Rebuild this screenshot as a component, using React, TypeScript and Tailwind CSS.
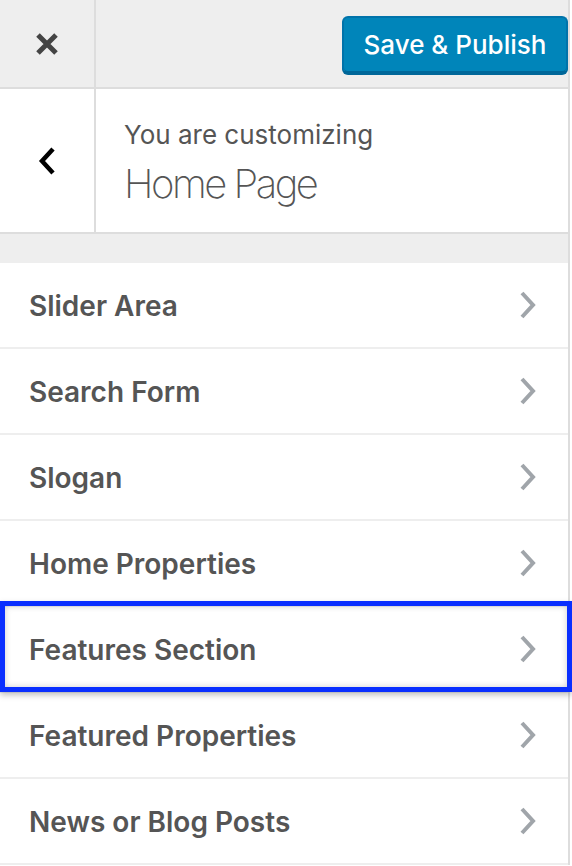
import React from "react";

const items = [
  "Slider Area",
  "Search Form",
  "Slogan",
  "Home Properties",
  "Features Section",
  "Featured Properties",
  "News or Blog Posts",
];

function ChevronRight() {
  return (
    <svg width="20" height="30" viewBox="0 0 20 30" className="shrink-0">
      <path d="M4 3 L15 15 L4 27" fill="none" stroke="#a0a5aa" strokeWidth="4" />
    </svg>
  );
}

export default function App() {
  return (
    <div
      className="relative w-[572px] h-[866px] overflow-hidden bg-white"
      style={{ fontFamily: "Inter, 'Noto Sans', sans-serif" }}
    >
      <div className="w-[570px] border-r-2 border-[#ddd]">
        {/* Header */}
        <div className="flex h-[89px] bg-[#eee] border-b-2 border-[#ddd]">
          <div className="w-[96px] border-r-2 border-[#ddd] flex items-center justify-center">
            <svg width="24" height="24" viewBox="0 0 24 24" className="mr-[1px] mt-[1px]">
              <path d="M3 3 L21 21 M21 3 L3 21" stroke="#444" strokeWidth="5" />
            </svg>
          </div>
          <div className="flex-1 flex items-start justify-end pt-[16px]">
            <button className="h-[57px] w-[226px] rounded-[6px] bg-[#0085ba] border-2 border-[#0073aa] border-b-[#006799] shadow-[0_2px_0_#006799] text-white text-[26px] font-medium">
              Save &amp; Publish
            </button>
          </div>
        </div>
        {/* Info */}
        <div className="flex h-[145px] bg-white border-b-2 border-[#ddd]">
          <div className="w-[96px] border-r-2 border-[#ddd] flex items-center justify-center">
            <svg width="20" height="30" viewBox="0 0 20 30" className="mt-[1px]">
              <path d="M16 3 L5 15 L16 27" fill="none" stroke="#000" strokeWidth="4.5" />
            </svg>
          </div>
          <div className="flex-1 pl-[28px] pt-[31px]">
            <div className="text-[26px] leading-[30px] text-[#555]">You are customizing</div>
            <div className="text-[40px] leading-[48px] font-extralight text-[#555] mt-[10px] tracking-[-2.5px]">
              Home Page
            </div>
          </div>
        </div>
        <div className="h-[29px] bg-[#eee]" />
        {/* Items */}
        {items.map((t) => (
          <div
            key={t}
            className="flex h-[86px] items-center justify-between pl-[29px] pr-[30px] border-b-2 border-[#eee] bg-white"
          >
            <span className="text-[28px] font-semibold text-[#555] mt-[1px]">{t}</span>
            <ChevronRight />
          </div>
        ))}
      </div>
      {/* Highlight overlay */}
      <div className="absolute left-0 top-[601px] w-[572px] h-[91px] border-[5px] border-[#0a2fff] shadow-[0_3px_6px_rgba(0,0,0,0.25),inset_0_0_6px_rgba(0,0,0,0.2)]" />
    </div>
  );
}
